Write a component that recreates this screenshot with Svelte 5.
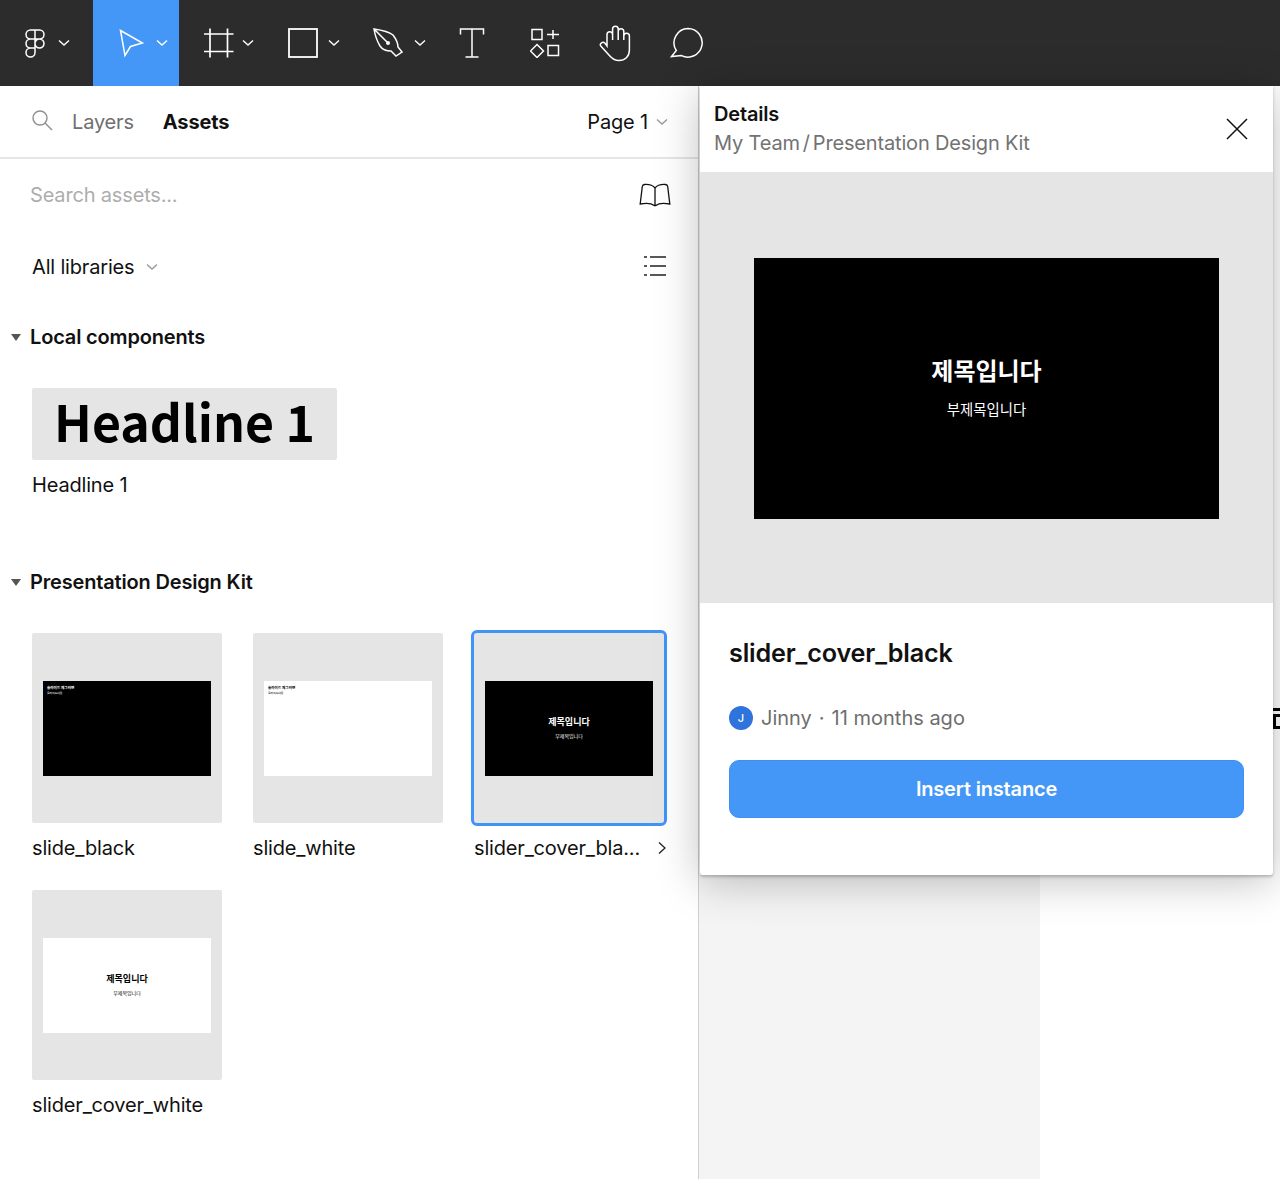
<script>
  const assets = [
    { name: 'slide_black', dark: true, kind: 'corner' },
    { name: 'slide_white', dark: false, kind: 'corner' },
    { name: 'slider_cover_bla...', dark: true, kind: 'cover', selected: true },
    { name: 'slider_cover_white', dark: false, kind: 'cover' }
  ];
</script>

{#snippet chev(cls)}
  <svg class={cls} width="12" height="8" viewBox="0 0 12 8" fill="none"><path d="M1 1.500 6 6l5-4.500" stroke="currentColor" stroke-width="1.400"/></svg>
{/snippet}

<div class="page">
  <header class="toolbar">
    <div class="tool logo">
      <svg width="24" height="30" viewBox="0 0 24 30" fill="none" stroke="#fff" stroke-width="1.500">
        <path d="M12 2H7.500a4.500 4.500 0 0 0 0 9H12zM12 2h4.500a4.500 4.500 0 0 1 0 9H12zM12 11H7.500a4.500 4.500 0 0 0 0 9H12zM12 15.500a4.500 4.500 0 1 0 9 0 4.500 4.500 0 1 0-9 0zM12 20H7.500a4.500 4.500 0 1 0 4.500 4.500z"/>
      </svg>
      {@render chev('tc')}
    </div>
    <div class="tool move">
      <svg width="26" height="30" viewBox="0 0 26 30" fill="none" stroke="#fff" stroke-width="1.500"><path d="M2.500 2.500 24.500 15 12.500 18.500 7 27.500z"/></svg>
      {@render chev('tc')}
    </div>
    <div class="tool frame">
      <svg width="30" height="30" viewBox="0 0 30 30" fill="none" stroke="#fff" stroke-width="1.700"><path d="M6 0.500v29M23.500 0.500v29M0 6h29.500M0 23.500h29.500"/></svg>
      {@render chev('tc')}
    </div>
    <div class="tool shape">
      <svg width="30" height="30" viewBox="0 0 30 30" fill="none" stroke="#fff" stroke-width="1.800"><rect x="1" y="1" width="28" height="28"/></svg>
      {@render chev('tc')}
    </div>
    <div class="tool pen">
      <svg width="30" height="30" viewBox="0 0 30 30" fill="none" stroke="#fff" stroke-width="1.500"><path d="M1 1C8 2 15 3 20 7c3 4 5 8 5 12l4 5-6 4-5-5c-5 0-9-2-11-5C4 13 2 7 1 1zM1 1l13 13"/><circle cx="15" cy="15" r="2" fill="#fff" stroke="none"/></svg>
      {@render chev('tc')}
    </div>
    <div class="plain text-tool">
      <svg width="26" height="32" viewBox="0 0 26 32" fill="none" stroke="#fff" stroke-width="1.500"><path d="M1.500 7.500V2h23v5.500M13 2v28M6.500 30h13"/></svg>
    </div>
    <div class="plain comp-tool">
      <svg width="30" height="30" viewBox="0 0 30 30" fill="none" stroke="#fff" stroke-width="1.500"><rect x="2" y="1.500" width="10" height="10"/><path d="M23 2v9M17 6.500h12"/><path d="M7 16.500l6.500 6.500-6.500 6.500L.5 23z"/><rect x="18" y="17.500" width="10.500" height="10"/></svg>
    </div>
    <div class="plain hand-tool">
      <svg width="34" height="37" viewBox="0 0 34 37" fill="none" stroke="#fff" stroke-width="1.500"><path d="M8 21V9.500a2.800 2.800 0 0 1 5.600 0V15V4a2.800 2.800 0 0 1 5.600 0v11V6.500a2.800 2.800 0 0 1 5.600 0V15v-4a2.800 2.800 0 0 1 5.600 0v14c0 6.500-4.500 10.500-10.500 10.500-4 0-7-2-9.500-5L1.800 21c-1.500-2 1.500-5 4-3z"/></svg>
    </div>
    <div class="plain chat-tool">
      <svg width="33" height="32" viewBox="0 0 33 32" fill="none" stroke="#fff" stroke-width="1.500"><path d="M18 1.500a14.300 14.300 0 1 1-6.500 27.100L1.500 29.500l4.800-6A14.300 14.300 0 0 1 18 1.500z"/></svg>
    </div>
  </header>

  <div class="work">
    <aside class="panel">
      <nav class="tabs">
        <svg class="search" width="22" height="22" viewBox="0 0 22 22" fill="none" stroke="#8f8f8f" stroke-width="1.400"><circle cx="9" cy="9" r="7"/><path d="m14 14 7 7"/></svg>
        <span class="tab">Layers</span>
        <span class="tab on">Assets</span>
        <span class="page-pick">Page 1 {@render chev('tg')}</span>
      </nav>

      <div class="search-row">
        <span class="ph">Search assets...</span>
        <svg width="32" height="24" viewBox="0 0 32 24" fill="none" stroke="#111" stroke-width="1.300"><path d="M16 5C14 2.500 10 1.200 5.500 1.500 4 1.600 3.500 2.200 3.300 3.500L1.200 21c5-1 11-1 14 1.500h1.600c3-2.500 9-2.500 14-1.500L28.700 3.500c-.2-1.300-.7-1.900-2.200-2C22 1.200 18 2.500 16 5zM16 5v17.500"/></svg>
      </div>

      <div class="lib-row">
        <span class="libs">All libraries {@render chev('tg')}</span>
        <svg class="list" width="24" height="22" viewBox="0 0 24 22" fill="none" stroke="#222" stroke-width="1.300"><path d="M1 2h3M7 2h16M1 11h3M7 11h16M1 20h3M7 20h16"/></svg>
      </div>

      <h2 class="sect local"><i class="tri"></i>Local components</h2>
      <div class="headline-card">Headline 1</div>
      <div class="label">Headline 1</div>

      <h2 class="sect kit"><i class="tri"></i>Presentation Design Kit</h2>
      <div class="grid">
        {#each assets as a}
          <div class="cell">
            <div class="thumb" class:selected={a.selected}>
              <div class="slide" class:dark={a.dark} class:cover={a.kind === 'cover'}>
                {#if a.kind === 'cover'}
                  <b>제목입니다</b><small>부제목입니다</small>
                {:else}
                  <b>슬라이드 제그러면</b><small>슬라이드내용</small>
                {/if}
              </div>
            </div>
            <div class="label name">
              <span>{a.name}</span>
              {#if a.selected}
                <svg width="10" height="14" viewBox="0 0 10 14" fill="none" stroke="#222" stroke-width="1.300"><path d="m2 1.500 6 5.500-6 5.500"/></svg>
              {/if}
            </div>
          </div>
        {/each}
      </div>
    </aside>

    <main class="stage">
      <div class="strip"></div>
      <div class="clip"><i></i><i class="box"></i></div>
      <section class="details">
        <div class="head">
          <div>
            <div class="d-title">Details</div>
            <div class="d-path">My Team<span class="slash">/</span>Presentation Design Kit</div>
          </div>
          <svg width="22" height="22" viewBox="0 0 22 22" fill="none" stroke="#111" stroke-width="1.500"><path d="m1 1 20 20M21 1 1 21"/></svg>
        </div>
        <div class="preview">
          <div class="big-slide">
            <b>제목입니다</b>
            <small>부제목입니다</small>
          </div>
        </div>
        <div class="info">
          <h1>slider_cover_black</h1>
          <div class="meta"><span class="avatar">J</span><span>Jinny<span class="dot">·</span>11 months ago</span></div>
          <button>Insert instance</button>
        </div>
      </section>
    </main>
  </div>
</div>

<style>
  :global(body) { margin: 0; background: #fff; }
  .page {
    width: 1280px; height: 1179px; overflow: hidden; display: flex; flex-direction: column;
    font-family: Inter, "Noto Sans CJK KR", sans-serif; color: #111; letter-spacing: -.17px;
  }
  .toolbar { height: 86px; flex: none; background: #2c2c2c; display: flex; align-items: center; }
  .tool { width: 86px; height: 86px; display: flex; align-items: center; color: #fff; box-sizing: border-box; }
  .tool.logo { width: 93px; padding-left: 23px; gap: 11px; }
  .tool.move { background: #4597f7; padding-left: 25px; gap: 12px; }
  .tool.frame { padding-left: 25px; gap: 8px; }
  .tool.shape { padding-left: 23px; gap: 10px; }
  .tool.pen { padding-left: 22px; gap: 11px; }
  .tc { flex: none; }
  .plain { display: flex; align-items: center; }
  .text-tool { margin-left: 22px; }
  .comp-tool { margin-left: 45px; }
  .hand-tool { margin-left: 39px; }
  .chat-tool { margin-left: 37px; }

  .work { flex: 1; display: flex; min-height: 0; }
  .panel { width: 699px; flex: none; box-sizing: border-box; border-right: 1px solid #cfcfcf; font-size: 20px; }
  .tabs { height: 73px; box-sizing: border-box; border-bottom: 2px solid #e5e5e5; display: flex; align-items: center; padding: 0 30px 0 31px; }
  .search { margin-right: 19px; margin-top: -3px; }
  .tab { color: #6f6f6f; margin-right: 29px; }
  .tab.on { color: #111; font-weight: 700; }
  .page-pick { margin-left: auto; display: flex; align-items: center; gap: 8px; }
  .tg { color: #9a9a9a; }
  .search-row { display: flex; align-items: center; justify-content: space-between; height: 72px; padding: 0 27px 2px 30px; }
  .ph { color: #adadad; }
  .lib-row { display: flex; align-items: center; justify-content: space-between; height: 68px; padding: 0 31px 0 32px; }
  .list { margin-top: -2px; }
  .libs { display: flex; align-items: center; gap: 11px; }
  .sect { margin: 0; font-size: 20px; font-weight: 600; display: flex; align-items: center; padding-left: 11px; gap: 9px; line-height: 28px; }
  .local { margin-top: 22px; }
  .kit { margin-top: 69px; }
  .tri { width: 0; height: 0; border-left: 5.500px solid transparent; border-right: 5.500px solid transparent; border-top: 7px solid #555; }
  .headline-card {
    margin: 37px 0 0 32px; width: 305px; height: 72px; box-sizing: border-box; padding-bottom: 8px; background: #e5e5e5; border-radius: 2px;
    display: flex; align-items: center; justify-content: center; letter-spacing: 0;
    font-family: "Noto Sans CJK KR", sans-serif; font-weight: 700; font-size: 50px; color: #000; line-height: 64px;
  }
  .label { line-height: 28px; margin: 11px 0 0 32px; }
  .grid { display: grid; grid-template-columns: repeat(3, 190px); column-gap: 31px; row-gap: 28px; margin: 37px 0 0 32px; }
  .cell { width: 190px; }
  .cell:nth-child(3) { width: 193px; }
  .thumb { width: 190px; height: 190px; background: #e5e5e5; border-radius: 2px; display: flex; align-items: center; justify-content: center; }
  .thumb.selected { outline: 3px solid #3f94f6; border-radius: 3px; }
  .slide { width: 168px; height: 95px; box-sizing: border-box; background: #fff; color: #000; display: flex; flex-direction: column; padding: 5px 4px; gap: 2px; font-family: "Noto Sans CJK KR", sans-serif; line-height: 1.200; letter-spacing: 0; }
  .slide.dark { background: #000; color: #fff; }
  .slide b { font-size: 3.600px; font-weight: 700; }
  .slide small { font-size: 2.800px; }
  .slide.cover { align-items: center; justify-content: center; padding: 0; gap: 6px; }
  .slide.cover b { font-size: 9px; }
  .slide.cover small { font-size: 5px; }
  .name { margin: 11px 0 0; display: flex; align-items: center; justify-content: space-between; }

  .stage { flex: 1; position: relative; background: #fff; min-width: 0; }
  .strip { position: absolute; left: 0; width: 341px; top: 789px; bottom: 0; background: #f4f4f4; }
  .clip { position: absolute; left: 574px; top: 622px; width: 7px; height: 21px; display: flex; flex-direction: column; gap: 3px; }
  .clip i { display: block; height: 3px; background: #000; }
  .clip .box { height: 15px; box-sizing: border-box; background: #fff; border: 3px solid #000; border-right: 0; }
  .details {
    position: absolute; left: 1px; top: 0; width: 573px; height: 789px; background: #fff; border-radius: 0 0 3px 3px;
    box-shadow: 0 2px 3px rgba(0,0,0,.22), 0 6px 44px rgba(0,0,0,.25); display: flex; flex-direction: column;
  }
  .head { height: 86px; flex: none; display: flex; align-items: center; justify-content: space-between; padding: 0 25px 0 14px; font-size: 20px; line-height: 29px; box-sizing: border-box; }
  .d-title { font-weight: 600; }
  .d-path { color: #727272; }
  .slash { margin: 0 3px; }
  .preview { height: 431px; flex: none; background: #e5e5e5; display: flex; align-items: center; justify-content: center; }
  .big-slide { width: 465px; height: 261px; box-sizing: border-box; padding-bottom: 3px; background: #000; color: #fff; display: flex; flex-direction: column; align-items: center; justify-content: center; font-family: "Noto Sans CJK KR", sans-serif; margin-top: 2px; letter-spacing: 0; }
  .big-slide b { font-size: 24px; font-weight: 700; line-height: 30px; margin-bottom: 14px; }
  .big-slide small { font-size: 14.400px; line-height: 20px; }
  .info { padding: 0 29px; }
  .info h1 { margin: 33px 0 0; font-size: 25.200px; font-weight: 600; line-height: 34px; color: #111; }
  .meta { display: flex; align-items: center; gap: 8px; margin-top: 34px; color: #6e6e6e; font-size: 20px; line-height: 28px; letter-spacing: 0; }
  .dot { margin: 0 7px; }
  .avatar { width: 24px; height: 24px; border-radius: 50%; background: #2e74dc; color: #fff; font-size: 11px; font-weight: 500; display: flex; align-items: center; justify-content: center; }
  button { display: block; width: 515px; height: 58px; margin-top: 28px; border: 1px solid #3c90f5; border-radius: 10px; background: #4597f7; color: #fff; font: 600 20px Inter, sans-serif; letter-spacing: -.17px; padding: 0; }
</style>
